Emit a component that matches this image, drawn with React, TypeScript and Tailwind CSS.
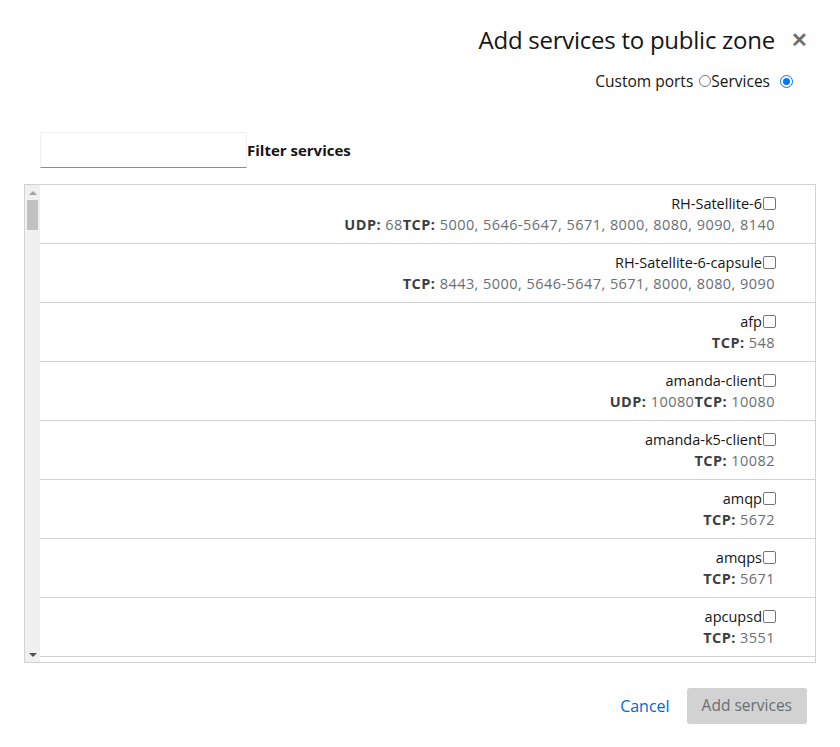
import React from "react";

type Port = { proto: string; ports: string };
type Svc = { name: string; ports: Port[] };

const services: Svc[] = [
  { name: "RH-Satellite-6", ports: [{ proto: "UDP", ports: "68" }, { proto: "TCP", ports: "5000, 5646-5647, 5671, 8000, 8080, 9090, 8140" }] },
  { name: "RH-Satellite-6-capsule", ports: [{ proto: "TCP", ports: "8443, 5000, 5646-5647, 5671, 8000, 8080, 9090" }] },
  { name: "afp", ports: [{ proto: "TCP", ports: "548" }] },
  { name: "amanda-client", ports: [{ proto: "UDP", ports: "10080" }, { proto: "TCP", ports: "10080" }] },
  { name: "amanda-k5-client", ports: [{ proto: "TCP", ports: "10082" }] },
  { name: "amqp", ports: [{ proto: "TCP", ports: "5672" }] },
  { name: "amqps", ports: [{ proto: "TCP", ports: "5671" }] },
  { name: "apcupsd", ports: [{ proto: "TCP", ports: "3551" }] },
];

function Checkbox() {
  return <span className="inline-block w-[13px] h-[13px] border border-[#767676] rounded-[2px] bg-white ml-[1px] mb-[1px]" />;
}

export default function App() {
  return (
    <div className="w-[840px] h-[747px] bg-white flex flex-col text-[#151515]" style={{ fontFamily: '"Open Sans", "Liberation Sans", sans-serif' }}>
      <div className="flex justify-end items-center pt-[25px] pr-[32px]">
        <h1 className="text-[24px] leading-[30px] tracking-[-0.25px]">Add services to public zone</h1>
        <span className="ml-[16px] text-[#6a6e73] text-[20px] font-bold leading-none">✕</span>
      </div>
      <div className="flex justify-end items-center mt-[16px] pr-[47px] text-[15.5px] leading-[20px]">
        <span>Custom ports</span>
        <span className="ml-[6px] w-[12px] h-[12px] rounded-full border border-[#767676] bg-white" />
        <span>Services</span>
        <span className="ml-[10px] w-[13px] h-[13px] rounded-full border border-[#0075ff] bg-white flex items-center justify-center">
          <span className="w-[7px] h-[7px] rounded-full bg-[#0075ff]" />
        </span>
      </div>
      <div className="flex items-center mt-[41px] ml-[40px]">
        <div className="w-[207px] h-[36px] border border-[#f0f0f0] border-b-[#8a8d90]" />
        <span className="font-bold text-[15px]">Filter services</span>
      </div>
      <div className="mt-[16px] ml-[24px] w-[792px] h-[479px] border border-[#d2d2d2] flex overflow-hidden">
        <div className="w-[15px] bg-[#f0f0f0] flex flex-col items-center shrink-0">
          <span className="mt-[6px] w-0 h-0 border-l-[4px] border-r-[4px] border-b-[4px] border-l-transparent border-r-transparent border-b-[#a3a3a3]" />
          <span className="mt-[5px] w-[11px] h-[30px] bg-[#c1c1c1]" />
          <span className="flex-1" />
          <span className="mb-[5px] w-0 h-0 border-l-[4px] border-r-[4px] border-t-[4px] border-l-transparent border-r-transparent border-t-[#505050]" />
        </div>
        <div className="flex-1 flex flex-col">
          {services.map((s) => (
            <div key={s.name} className="h-[59px] shrink-0 border-b border-[#d2d2d2] flex flex-col items-end pr-[39px] pt-[8px] leading-[21px]">
              <div className="flex items-center text-[14.5px]">
                <span>{s.name}</span>
                <Checkbox />
              </div>
              <div className="pr-[1px] text-[14.5px] tracking-[0.45px]">
                {s.ports.map((p) => (
                  <span key={p.proto}>
                    <span className="font-bold text-[#3c3f42]">{p.proto}:</span>
                    <span className="text-[#6a6e73]"> {p.ports}</span>
                  </span>
                ))}
              </div>
            </div>
          ))}
        </div>
      </div>
      <div className="flex justify-end items-center mt-[25px] pr-[33px]">
        <span className="text-[#0066cc] text-[16px] mr-[17px]">Cancel</span>
        <span className="h-[36px] px-[15px] rounded-[3px] bg-[#d2d2d2] text-[#6a6e73] text-[15.5px] flex items-center">Add services</span>
      </div>
    </div>
  );
}
